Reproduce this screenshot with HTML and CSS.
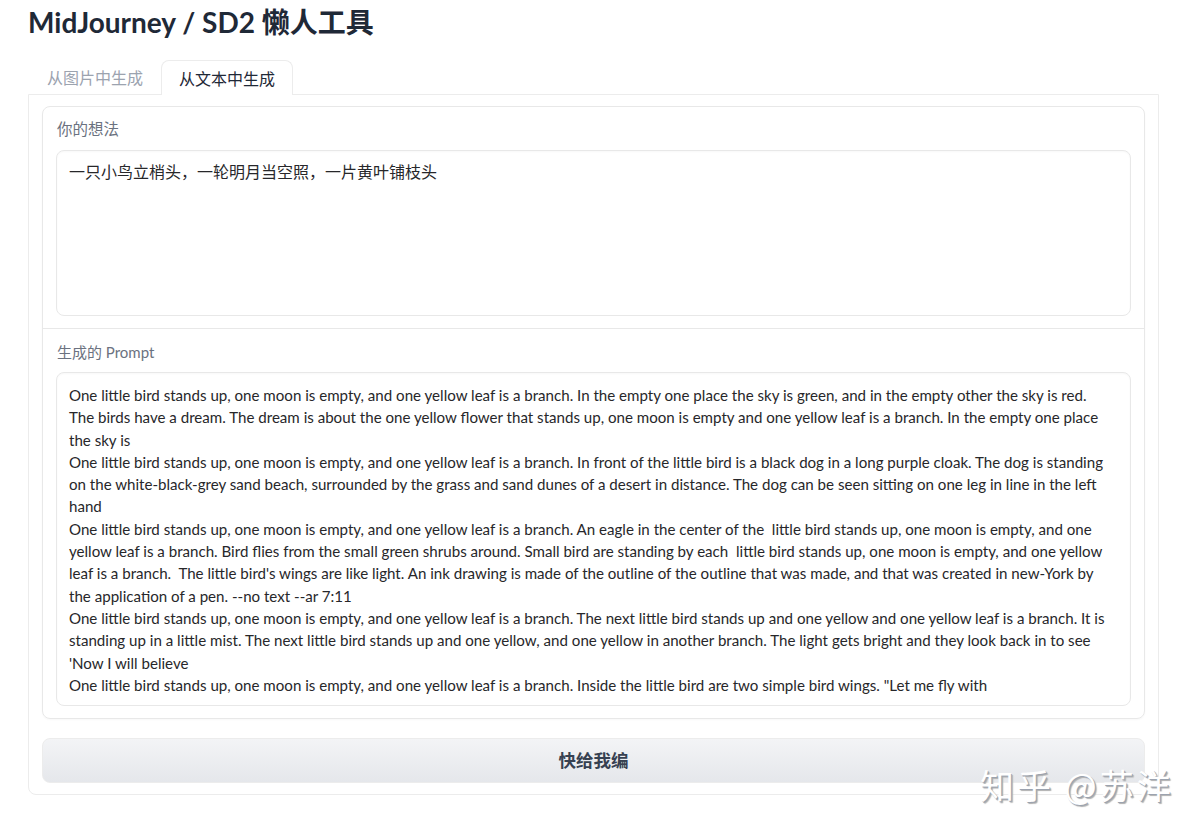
FILE: index.html
```html
<!DOCTYPE html>
<html lang="zh-CN">
<head>
  <meta charset="UTF-8">
  <meta name="viewport" content="width=device-width, initial-scale=1.0">
  <title>MidJourney / SD2 懒人工具</title>
  <link rel="stylesheet" href="styles.css">
</head>
<body>
  <div class="page">
    <h1>MidJourney / SD2 懒人工具</h1>

    <div class="tabs">
      <button class="tab">从图片中生成</button>
      <button class="tab active">从文本中生成</button>
    </div>

    <div class="panel">
      <div class="block">
        <div class="field">
          <label class="field-label" for="idea">你的想法</label>
          <div class="textbox idea" id="idea">一只小鸟立梢头，一轮明月当空照，一片黄叶铺枝头</div>
        </div>
        <div class="field">
          <label class="field-label" for="prompt">生成的 Prompt</label>
          <div class="textbox prompt" id="prompt">One little bird stands up, one moon is empty, and one yellow leaf is a branch. In the empty one place the sky is green, and in the empty other the sky is red.
The birds have a dream. The dream is about the one yellow flower that stands up, one moon is empty and one yellow leaf is a branch. In the empty one place
the sky is
One little bird stands up, one moon is empty, and one yellow leaf is a branch. In front of the little bird is a black dog in a long purple cloak. The dog is standing
on the white-black-grey sand beach, surrounded by the grass and sand dunes of a desert in distance. The dog can be seen sitting on one leg in line in the left
hand
One little bird stands up, one moon is empty, and one yellow leaf is a branch. An eagle in the center of the  little bird stands up, one moon is empty, and one
yellow leaf is a branch. Bird flies from the small green shrubs around. Small bird are standing by each  little bird stands up, one moon is empty, and one yellow
leaf is a branch.  The little bird's wings are like light. An ink drawing is made of the outline of the outline that was made, and that was created in new-York by
the application of a pen. --no text --ar 7:11
One little bird stands up, one moon is empty, and one yellow leaf is a branch. The next little bird stands up and one yellow and one yellow leaf is a branch. It is
standing up in a little mist. The next little bird stands up and one yellow, and one yellow in another branch. The light gets bright and they look back in to see
'Now I will believe
One little bird stands up, one moon is empty, and one yellow leaf is a branch. Inside the little bird are two simple bird wings. "Let me fly with</div>
        </div>
      </div>

      <button class="submit">快给我编</button>
    </div>
  </div>

  <div class="watermark">知乎 @苏洋</div>
</body>
</html>
```

FILE: styles.css
```css
* {
  margin: 0;
  padding: 0;
  box-sizing: border-box;
}
body {
  font-family: 'Lato', 'Noto Sans CJK SC', sans-serif;
  background-color: white;
  color: #1f2937;
  width: 1200px;
  height: 836px;
  overflow: hidden;
}
.page {
  padding: 2px 41px 0 28px;
}
h1 {
  font-size: 28px;
  font-weight: 700;
  line-height: 40px;
  color: #1f2937;
}
.tabs {
  display: flex;
  margin-top: 18px;
  padding-left: 1px;
  position: relative;
  z-index: 1;
}
.tab {
  font-family: 'Noto Sans CJK SC', sans-serif;
  font-size: 16px;
  line-height: 22px;
  padding: 5px 17px 6px;
  white-space: nowrap;
  border: 1px solid transparent;
  border-bottom: none;
  border-radius: 8px 8px 0 0;
  background: none;
  color: #9ca3af;
  cursor: pointer;
}
.tab.active {
  border-color: #ececec;
  background-color: white;
  color: #1f2937;
  margin-bottom: -1px;
}
.panel {
  border: 1px solid #ececec;
  border-radius: 0 0 8px 8px;
  padding: 11px 13px 11px 13px;
  display: flex;
  flex-direction: column;
  gap: 19px;
}
.block {
  border: 1px solid #e8e8e8;
  border-radius: 8px;
  box-shadow: 0 1px 2px rgba(0, 0, 0, 0.03);
}
.field {
  padding: 10px 13px 12px 13px;
}
.field .field-label {
  margin-bottom: 11px;
}
.field + .field {
  border-top: 1px solid #e8e8e8;
  padding-top: 12px;
}
.field-label {
  display: block;
  font-family: 'Noto Sans CJK SC', sans-serif;
  font-size: 15.5px;
  line-height: 22px;
  color: #6b7280;
  padding-left: 1px;
}
.field + .field .field-label {
  font-family: 'Lato', 'Noto Sans CJK SC', sans-serif;
  font-size: 15px;
  margin-bottom: 9px;
}
.textbox {
  border: 1px solid #e8e8e8;
  border-radius: 8px;
  box-shadow: inset 0 1px 2px rgba(0, 0, 0, 0.03);
  padding: 11px 12px;
  color: #27272a;
  font-size: 15px;
  line-height: 22.3px;
  white-space: pre;
  overflow: hidden;
}
.idea {
  font-family: 'Noto Sans CJK SC', sans-serif;
  font-size: 16px;
  padding-top: 9px;
  height: 166px;
}
.prompt {
  font-size: 15.1px;
  height: 334px;
}
.submit {
  height: 45px;
  padding-bottom: 3px;
  border: 1px solid #ececec;
  border-radius: 8px;
  background: linear-gradient(to bottom, #f3f4f6, #e5e7eb);
  font-family: 'Noto Sans CJK SC', sans-serif;
  font-size: 17.5px;
  font-weight: 700;
  color: #374151;
  cursor: pointer;
}
.watermark {
  position: absolute;
  left: 980px;
  top: 760px;
  font-family: 'Noto Sans CJK SC', sans-serif;
  font-size: 34px;
  font-weight: 400;
  color: white;
  text-shadow: 1px 1px 0 #9ca3af, 2px 2px 1px #b0b0b0;
  letter-spacing: 3px;
}
```
